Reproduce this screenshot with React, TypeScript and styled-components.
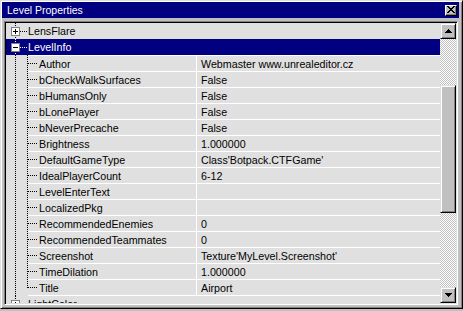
import React from "react";
import styled, { createGlobalStyle } from "styled-components";

const GlobalStyle = createGlobalStyle`
  html, body { margin: 0; padding: 0; background: #c0c0c0; }
  body { font-family: "Liberation Sans", Arial, sans-serif; font-size: 10.7px; color: #000; }
  * { box-sizing: border-box; }
`;

const vDots = (x: number, color: string, h = "100%") =>
  `repeating-linear-gradient(to bottom, ${color} 0 1px, transparent 1px 2px) ${x}px 0 / 1px ${h} no-repeat`;
const hDots = (x: number, y: number, w: number, color: string) =>
  `repeating-linear-gradient(to right, ${color} 0 1px, transparent 1px 2px) ${x}px ${y}px / ${w}px 1px no-repeat`;

const Window = styled.div`
  width: 463px;
  height: 309px;
  display: flex;
  flex-direction: column;
  background: #c0c0c0;
  border: 1px solid;
  border-color: #dfdfdf #000 #000 #dfdfdf;
  box-shadow: inset 1px 1px #fff, inset -1px -1px #808080;
  padding: 1px;
`;

const TitleBar = styled.div`
  height: 16px;
  flex: none;
  margin-right: 2px;
  background: #000080;
  color: #fff;
  display: flex;
  align-items: center;
  justify-content: space-between;
  padding: 0 2px 0 5px;
  font-size: 10.5px;
  white-space: nowrap;
`;

const CloseButton = styled.div`
  width: 12px;
  height: 11px;
  background: #c0c0c0;
  border: 1px solid;
  border-color: #fff #000 #000 #fff;
  box-shadow: inset -1px -1px #808080;
  display: flex;
  align-items: center;
  justify-content: center;
  padding: 0 1px 1px 0;
`;

const Panel = styled.div`
  margin: 3px 3px 0 2px;
  height: 284px;
  flex: none;
  border: 1px solid;
  border-color: #808080 #fff #fff #808080;
  box-shadow: inset 1px 1px #000, inset -1px -1px #dfdfdf;
  padding: 1px;
  display: flex;
  background: #e0e0e0;
`;

const Tree = styled.div`
  flex: 1;
  min-width: 0;
  display: flex;
  flex-direction: column;
  overflow: hidden;
`;

const TopRow = styled.div<{ $selected?: boolean }>`
  height: 16px;
  flex: none;
  display: flex;
  align-items: center;
  background: ${(p) => (p.$selected ? "#000080" : "transparent")};
  color: ${(p) => (p.$selected ? "#fff" : "#000")};
  white-space: nowrap;
`;

const Expander = styled.div<{ $selected?: boolean }>`
  width: 22px;
  height: 100%;
  flex: none;
  display: flex;
  align-items: center;
  padding-left: 5px;
  background: ${(p) => {
    const c = p.$selected ? "#fff" : "#000";
    return `${vDots(9, c)}, ${hDots(14, 8, 8, c)}`;
  }};
`;

const ExpandBox = styled.div`
  width: 9px;
  height: 9px;
  border: 1px solid #808080;
  background: #fff;
  display: flex;
  align-items: center;
  justify-content: center;
`;

const Label = styled.span`
  padding-left: 0;
`;

const ChildRow = styled.div<{ $last?: boolean }>`
  height: ${(p) => (p.$last ? 17 : 16)}px;
  flex: none;
  display: flex;
`;

const ChildGutter = styled.div<{ $last?: boolean }>`
  width: 22px;
  flex: none;
  background: ${(p) =>
    `${vDots(9, "#000")}, ${vDots(21, "#000", p.$last ? "9px" : "100%")}`};
`;

const Cells = styled.div<{ $last?: boolean }>`
  flex: 1;
  display: flex;
  border-top: 1px solid #fff;
  border-bottom: ${(p) => (p.$last ? "1px solid #fff" : "none")};
  white-space: nowrap;
`;

const NameCell = styled.div`
  width: 168px;
  flex: none;
  display: flex;
  align-items: center;
  padding-left: 11px;
  background: ${hDots(0, 7, 10, "#000")};
`;

const ValueCell = styled.div`
  flex: 1;
  display: flex;
  align-items: center;
  padding-left: 4px;
  border-left: 1px solid #fff;
`;

const Scrollbar = styled.div`
  width: 16px;
  flex: none;
  display: flex;
  flex-direction: column;
`;

const ArrowButton = styled.div`
  width: 16px;
  height: 16px;
  flex: none;
  background: #c0c0c0;
  border: 1px solid;
  border-color: #dfdfdf #000 #000 #dfdfdf;
  box-shadow: inset 1px 1px #fff, inset -1px -1px #808080;
  display: flex;
  align-items: center;
  justify-content: center;
`;

const Track = styled.div`
  flex: 1;
  display: flex;
  flex-direction: column;
  padding-top: 46px;
  background: repeating-conic-gradient(#c0c0c0 0% 25%, #fff 0% 50%) 0 0 / 2px 2px;
`;

const Thumb = styled.div`
  height: 128px;
  flex: none;
  background: #c0c0c0;
  border: 1px solid;
  border-color: #dfdfdf #000 #000 #dfdfdf;
  box-shadow: inset 1px 1px #fff, inset -1px -1px #808080;
`;

const PlusMinus = ({ plus }: { plus: boolean }) => (
  <svg width="5" height="5" viewBox="0 0 5 5" shapeRendering="crispEdges">
    <rect x="0" y="2" width="5" height="1" fill="#000" />
    {plus && <rect x="2" y="0" width="1" height="5" fill="#000" />}
  </svg>
);

const Arrow = ({ up }: { up: boolean }) => (
  <svg width="7" height="4" viewBox="0 0 7 4" shapeRendering="crispEdges">
    {up ? (
      <>
        <rect x="3" y="0" width="1" height="1" fill="#000" />
        <rect x="2" y="1" width="3" height="1" fill="#000" />
        <rect x="1" y="2" width="5" height="1" fill="#000" />
        <rect x="0" y="3" width="7" height="1" fill="#000" />
      </>
    ) : (
      <>
        <rect x="0" y="0" width="7" height="1" fill="#000" />
        <rect x="1" y="1" width="5" height="1" fill="#000" />
        <rect x="2" y="2" width="3" height="1" fill="#000" />
        <rect x="3" y="3" width="1" height="1" fill="#000" />
      </>
    )}
  </svg>
);

const CloseGlyph = () => (
  <svg width="8" height="7" viewBox="0 0 8 7" shapeRendering="crispEdges">
    {[0, 1, 2, 3, 4, 5, 6].map((i) => (
      <React.Fragment key={i}>
        <rect x={i} y={i} width="2" height="1" fill="#000" />
        <rect x={6 - i} y={i} width="2" height="1" fill="#000" />
      </React.Fragment>
    ))}
  </svg>
);

const children: [string, string][] = [
  ["Author", "Webmaster www.unrealeditor.cz"],
  ["bCheckWalkSurfaces", "False"],
  ["bHumansOnly", "False"],
  ["bLonePlayer", "False"],
  ["bNeverPrecache", "False"],
  ["Brightness", "1.000000"],
  ["DefaultGameType", "Class'Botpack.CTFGame'"],
  ["IdealPlayerCount", "6-12"],
  ["LevelEnterText", ""],
  ["LocalizedPkg", ""],
  ["RecommendedEnemies", "0"],
  ["RecommendedTeammates", "0"],
  ["Screenshot", "Texture'MyLevel.Screenshot'"],
  ["TimeDilation", "1.000000"],
  ["Title", "Airport"],
];

export default function App() {
  return (
    <>
      <GlobalStyle />
      <Window>
        <TitleBar>
          <span>Level Properties</span>
          <CloseButton>
            <CloseGlyph />
          </CloseButton>
        </TitleBar>
        <Panel>
          <Tree>
            <TopRow>
              <Expander>
                <ExpandBox>
                  <PlusMinus plus />
                </ExpandBox>
              </Expander>
              <Label>LensFlare</Label>
            </TopRow>
            <TopRow $selected>
              <Expander $selected>
                <ExpandBox>
                  <PlusMinus plus={false} />
                </ExpandBox>
              </Expander>
              <Label>LevelInfo</Label>
            </TopRow>
            {children.map(([name, value], i) => {
              const last = i === children.length - 1;
              return (
                <ChildRow key={name} $last={last}>
                  <ChildGutter $last={last} />
                  <Cells $last={last}>
                    <NameCell>{name}</NameCell>
                    <ValueCell>{value}</ValueCell>
                  </Cells>
                </ChildRow>
              );
            })}
            <TopRow>
              <Expander>
                <ExpandBox>
                  <PlusMinus plus />
                </ExpandBox>
              </Expander>
              <Label>LightColor</Label>
            </TopRow>
          </Tree>
          <Scrollbar>
            <ArrowButton>
              <Arrow up />
            </ArrowButton>
            <Track>
              <Thumb />
            </Track>
            <ArrowButton>
              <Arrow up={false} />
            </ArrowButton>
          </Scrollbar>
        </Panel>
      </Window>
    </>
  );
}
